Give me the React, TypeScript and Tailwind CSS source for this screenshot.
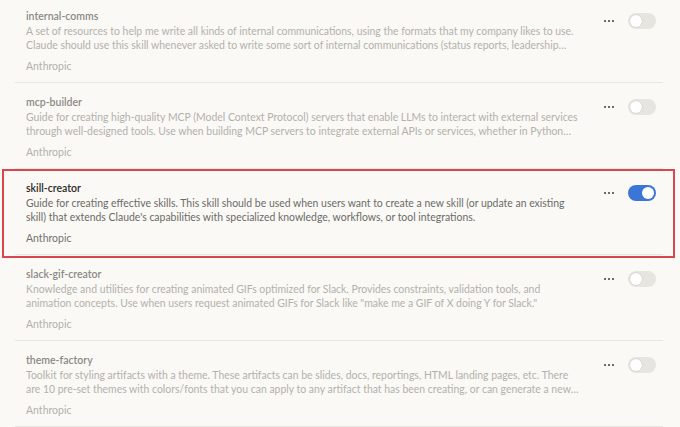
import { Fragment } from 'react';

interface Skill {
  name: string;
  description: string;
  author: string;
  enabled: boolean;
}

const skills: Skill[] = [
  {
    name: 'internal-comms',
    description:
      'A set of resources to help me write all kinds of internal communications, using the formats that my company likes to use. Claude should use this skill whenever asked to write some sort of internal communications (status reports, leadership updates, 3P updates, company newsletters, FAQs, incident reports, project updates, etc.).',
    author: 'Anthropic',
    enabled: false,
  },
  {
    name: 'mcp-builder',
    description:
      'Guide for creating high-quality MCP (Model Context Protocol) servers that enable LLMs to interact with external services through well-designed tools. Use when building MCP servers to integrate external APIs or services, whether in Python (FastMCP) or Node/TypeScript (MCP SDK).',
    author: 'Anthropic',
    enabled: false,
  },
  {
    name: 'skill-creator',
    description:
      "Guide for creating effective skills. This skill should be used when users want to create a new skill (or update an existing skill) that extends Claude's capabilities with specialized knowledge, workflows, or tool integrations.",
    author: 'Anthropic',
    enabled: true,
  },
  {
    name: 'slack-gif-creator',
    description:
      'Knowledge and utilities for creating animated GIFs optimized for Slack. Provides constraints, validation tools, and animation concepts. Use when users request animated GIFs for Slack like "make me a GIF of X doing Y for Slack."',
    author: 'Anthropic',
    enabled: false,
  },
  {
    name: 'theme-factory',
    description:
      'Toolkit for styling artifacts with a theme. These artifacts can be slides, docs, reportings, HTML landing pages, etc. There are 10 pre-set themes with colors/fonts that you can apply to any artifact that has been creating, or can generate a new theme on-the-fly.',
    author: 'Anthropic',
    enabled: false,
  },
];

function Toggle({ on }: { on: boolean }) {
  return (
    <div
      className={`flex items-center w-[28px] h-[16px] rounded-full p-[2px] ${
        on ? 'bg-[#3b76d6] justify-end' : 'bg-[#e7e5df] justify-start'
      }`}
    >
      <div
        className={`w-[12px] h-[12px] rounded-full bg-white ${
          on ? '' : 'shadow-[0_0_0_0.5px_rgba(0,0,0,0.12)]'
        }`}
      />
    </div>
  );
}

function MoreDots() {
  return (
    <div className="flex items-center gap-[2px] h-[16px]">
      <span className="w-[2px] h-[2px] rounded-full bg-[#3d3c38]" />
      <span className="w-[2px] h-[2px] rounded-full bg-[#3d3c38]" />
      <span className="w-[2px] h-[2px] rounded-full bg-[#3d3c38]" />
    </div>
  );
}

function SkillRow({ skill }: { skill: Skill }) {
  const on = skill.enabled;
  return (
    <div className="flex border-b border-[#e8e6e0] pl-[11px] pr-[7px] pt-[12px] pb-[9px]">
      <div className="w-[558px] flex flex-col">
        <div
          className={`text-[10.5px] leading-[14px] font-semibold ${
            on ? 'text-[#2b2a26]' : 'text-[#8b8a85]'
          }`}
        >
          {skill.name}
        </div>
        <p
          className={`mt-[1px] text-[10.45px] leading-[14px] line-clamp-2 ${
            on ? 'text-[#6c6b66]' : 'text-[#b3b1ab]'
          }`}
        >
          {skill.description}
        </p>
        <div
          className={`mt-[7px] text-[10.5px] leading-[14px] ${
            on ? 'text-[#74726d]' : 'text-[#b3b1ab]'
          }`}
        >
          {skill.author}
        </div>
      </div>
      <div className="flex-1 flex items-start justify-end gap-[14px] pt-[4px]">
        <MoreDots />
        <Toggle on={on} />
      </div>
    </div>
  );
}

export default function App() {
  return (
    <div
      className="w-[680px] h-[427px] overflow-hidden bg-[#faf9f6]"
      style={{ fontFamily: 'Lato, "Open Sans", sans-serif' }}
    >
      <div className="-mt-[3px] mx-[15px] w-[648px]">
        {skills.map((s) => (
          <Fragment key={s.name}>
            {s.enabled ? (
              <div className="relative">
                <SkillRow skill={s} />
                <div className="absolute -left-[13px] -right-[12px] top-0 -bottom-[3px] border-2 border-[#d9464d] pointer-events-none" />
              </div>
            ) : (
              <SkillRow skill={s} />
            )}
          </Fragment>
        ))}
      </div>
    </div>
  );
}
